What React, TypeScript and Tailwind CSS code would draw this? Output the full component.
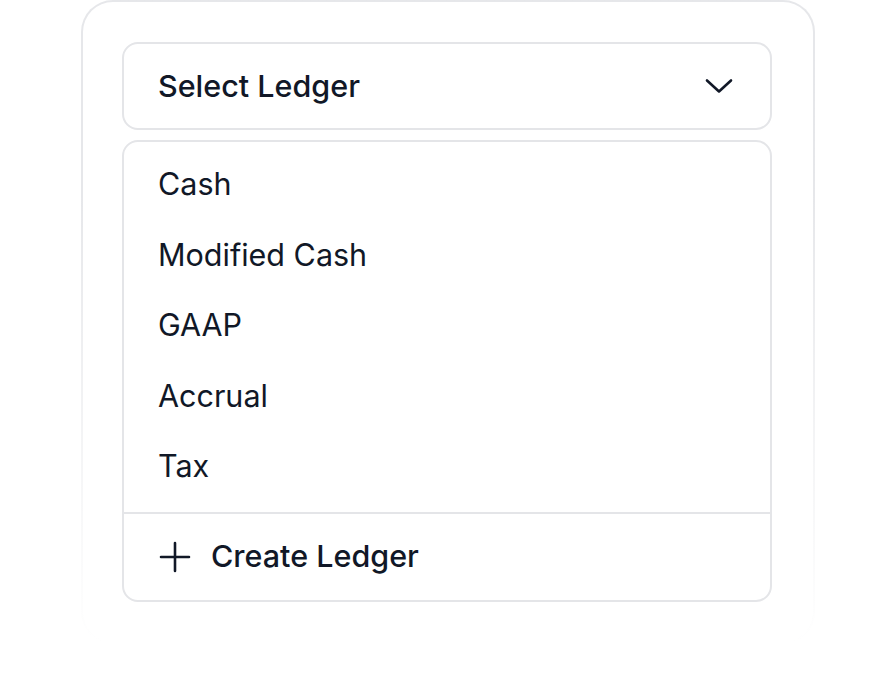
import React from "react";

const items = ["Cash", "Modified Cash", "GAAP", "Accrual", "Tax"];

export default function App() {
  return (
    <div
      className="min-h-[676px] w-full bg-white"
      style={{ fontFamily: "Inter, 'Noto Sans', sans-serif" }}
    >
      <div className="mx-auto w-[734px] rounded-[32px] bg-gradient-to-b from-[#e6e7ea] from-30% to-transparent to-100% p-[2px]">
        <div className="rounded-[30px] bg-white pl-[39px] pr-[41px] pt-[40px] pb-[40px]">
          <button className="flex h-[88px] w-full items-center justify-between rounded-[16px] border-2 border-[#e4e5e8] bg-white pl-[34px] pr-[37px] text-left">
            <span className="text-[30.5px] font-medium leading-none text-[#111827]">
              Select Ledger
            </span>
            <svg width="28" height="16" viewBox="0 0 28 16" fill="none">
              <path
                d="M2 2.5 L14 13.5 L26 2.5"
                stroke="#111827"
                strokeWidth="2.6"
                strokeLinecap="round"
                strokeLinejoin="round"
              />
            </svg>
          </button>
          <div className="mt-[10px] overflow-hidden rounded-[16px] border-2 border-[#e4e5e8] bg-white">
            <div className="pt-[7px] pb-[10px]">
              {items.map((it) => (
                <div
                  key={it}
                  className="flex h-[70.5px] items-center pl-[34px] text-[30.5px] font-normal leading-none text-[#111827]"
                >
                  {it}
                </div>
              ))}
            </div>
            <div className="flex h-[88px] items-center gap-[20px] border-t-2 border-[#e4e5e8] pl-[35px]">
              <svg width="32" height="32" viewBox="0 0 32 32" fill="none">
                <path
                  d="M16 2 V30 M2 16 H30"
                  stroke="#111827"
                  strokeWidth="2.6"
                  strokeLinecap="round"
                />
              </svg>
              <span className="text-[30.5px] font-medium leading-none text-[#111827]">
                Create Ledger
              </span>
            </div>
          </div>
        </div>
      </div>
    </div>
  );
}
